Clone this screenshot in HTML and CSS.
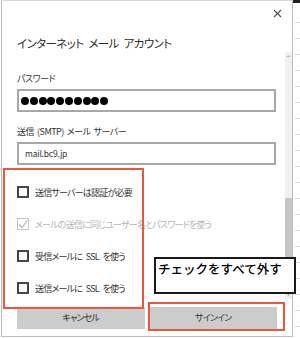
FILE: index.html
```html
<!DOCTYPE html>
<html lang="ja">
<head>
  <meta charset="UTF-8">
  <title>インターネット メール アカウント</title>
  <link rel="stylesheet" href="styles.css">
</head>
<body>
  <div class="dialog">
    <div class="head">
      <svg class="close" width="9" height="9" viewBox="0 0 9 9"><path d="M1 1L8 8M8 1L1 8" stroke="#555" stroke-width="1.2"/></svg>
    </div>
    <div class="title">インターネット メール アカウント</div>

    <div class="label">パスワード</div>
    <div class="field dots">
      <i></i><i></i><i></i><i></i><i></i><i></i><i></i><i></i><i></i><i></i>
    </div>

    <div class="label">送信 (SMTP) メール サーバー</div>
    <div class="field text">mail.bc9.jp</div>

    <ul class="checks">
      <li><span class="box"></span>送信サーバーは認証が必要</li>
      <li class="off"><span class="box checked"><svg width="12" height="12" viewBox="0 0 12 12"><path d="M2 6.5L5 9.5L10.5 2" fill="none" stroke="#b8b8b8" stroke-width="1.2"/></svg></span>メールの送信に同じユーザー名とパスワードを使う</li>
      <li><span class="box"></span>受信メールに SSL を使う</li>
      <li><span class="box"></span>送信メールに SSL を使う</li>
    </ul>

    <div class="buttons">
      <div class="btn">キャンセル</div>
      <div class="btn">サインイン</div>
    </div>

    <div class="scroll">
      <span class="arrow up">&#710;</span>
      <span class="thumb"></span>
      <span class="arrow down">&#711;</span>
    </div>
  </div>
  <div class="grid"></div>

  <div class="mark mark1"></div>
  <div class="mark mark2"></div>
  <div class="note">チェックをすべて外す</div>
</body>
</html>
```

FILE: styles.css
```css
*{margin: 0; padding: 0; box-sizing: border-box;}
body{width: 300px; height: 338px; overflow: hidden; display: flex; background: #fff; font-family: "Noto Sans CJK JP", "Noto Sans", sans-serif; font-feature-settings: "palt"; color: #333; position: relative;}
ul{list-style: none;}

div.dialog{position: relative; width: 292px; height: 337px; margin-left: 1px; padding-left: 15px; border: 1px solid #bdbdbd; border-top-color: #d6d6d6; background: #fff;}
div.grid{flex: 1; background: repeating-linear-gradient(to bottom, #fff 0 15px, #d8d8d8 15px 16px) no-repeat 2px 4px; border-top: 3px solid #222;}

div.head{height: 25px; position: relative;}
svg.close{position: absolute; left: 256px; top: 8px;}
div.title{margin-top: 8px; font-size: 11.5px; letter-spacing: -0.6px; word-spacing: 3px; line-height: 18px; color: #2b2b2b;}

div.label{margin-top: 20px; font-size: 9px; letter-spacing: -0.5px; word-spacing: 1.5px; line-height: 14px; color: #333;}
div.field{margin-top: 3px; width: 259px; height: 23px; border: 2px solid #a8a8a8;}
div.field + div.label{margin-top: 13px;}
div.dots{display: flex; align-items: center; gap: 0.8px; padding-left: 2px;}
div.dots i{width: 8px; height: 8px; border-radius: 50%; background: #000;}
div.text{font-size: 8.5px; letter-spacing: -0.2px; line-height: 19px; padding-left: 6px; color: #333;}

ul.checks{margin-top: 11px;}
ul.checks li{height: 32px; display: flex; align-items: center; font-size: 9px; letter-spacing: -0.8px; word-spacing: 2.5px; color: #333; white-space: pre;}
ul.checks li.off{color: #b5b5b5;}
span.box{width: 12px; height: 12px; border: 2px solid #444; margin-right: 6px; flex: none; position: relative;}
span.box.checked{border: 1px solid #c6c6c6;}
span.box svg{position: absolute; left: -1px; top: -1px;}

div.buttons{margin-top: 3px; display: flex; gap: 5px; width: 260px;}
div.btn{flex: 1; height: 22px; background: #cccccc; font-size: 9px; letter-spacing: -0.8px; line-height: 22px; text-align: center; color: #333;}

div.scroll{position: absolute; left: 283px; top: 51px; width: 7px; height: 247px; background: #f0f0f0;}
span.thumb{position: absolute; left: 0; top: 146px; width: 7px; height: 90px; background: #c6c6c6;}
span.arrow{position: absolute; left: 0; width: 7px; font-size: 9px; line-height: 9px; text-align: center; color: #999;}
span.up{top: 3px;}
span.down{bottom: -2px;}

div.mark{position: absolute; border: 2px solid #e9573f;}
div.mark1{left: 3px; top: 168px; width: 141px; height: 141px;}
div.mark2{left: 148px; top: 302px; width: 137px; height: 29px;}
div.note{position: absolute; left: 154px; top: 257px; width: 142px; height: 37px; border: 2px solid #1a1a1a; background: #fff; padding: 2px 0 0 2px; font-size: 12.5px; line-height: 16px; font-weight: 500; color: #000; font-feature-settings: normal;}
```
